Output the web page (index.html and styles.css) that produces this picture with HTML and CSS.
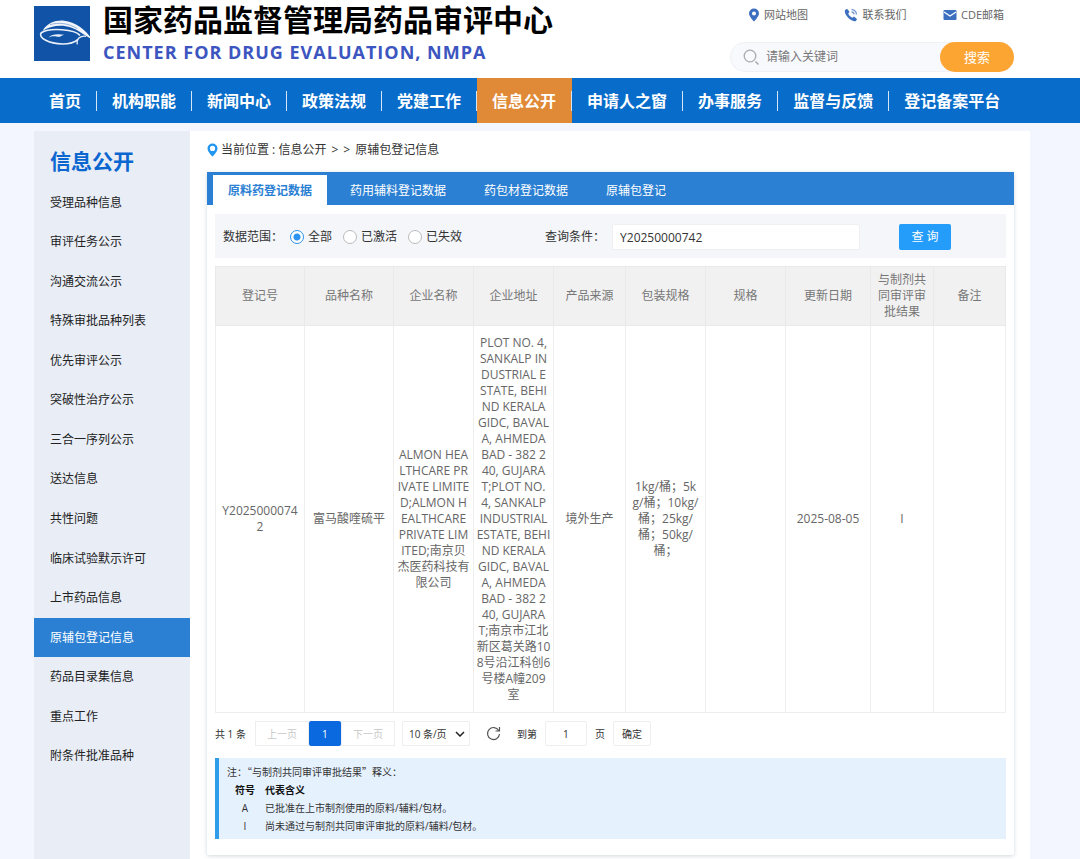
FILE: index.html
```html
<!DOCTYPE html>
<html lang="zh-CN">
<head>
<meta charset="utf-8">
<meta name="viewport" content="width=device-width, initial-scale=1">
<title>国家药品监督管理局药品审评中心</title>
<link rel="stylesheet" href="styles.css">
</head>
<body>
<header class="header">
  <div class="brand">
    <svg class="brand-logo" viewBox="102 18 168 165" aria-hidden="true">
      <rect x="102" y="18" width="168" height="165" fill="#1153a6"/>
      <path d="M128 92C142 68 168 60 192 62C226 65 256 88 277 119C262 109 250 103 240 96C212 76 168 68 128 92Z" fill="#f1f5fb"/>
      <path d="M150 74C176 66 206 70 232 86" fill="none" stroke="#6a8fc4" stroke-width="2"/>
      <path d="M240 106C224 88 150 82 124 98C112 112 146 132 188 132C208 132 224 127 234 118" fill="none" stroke="#e9f0fa" stroke-width="5" stroke-linejoin="round"/>
      <path d="M258 109C242 106 228 116 232 133" fill="none" stroke="#e9f0fa" stroke-width="4"/>
      <path d="M146 113C154 102 172 101 193 104C184 106 181 112 172 110C162 108 154 108 146 113Z" fill="#e9f0fa"/>
    </svg>
    <div class="brand-text">
      <h1 class="brand-name">国家药品监督管理局药品审评中心</h1>
      <p class="brand-english">CENTER FOR DRUG EVALUATION, NMPA</p>
    </div>
  </div>
  <div class="tools">
    <div class="quick-links">
      <a href="#"><svg width="12" height="14" viewBox="0 0 12 14" aria-hidden="true"><path fill="#3c6fc0" fill-rule="evenodd" d="M6 0.500a5 5 0 0 1 5 5C11 8.500 6 13.500 6 13.500S1 8.500 1 5.500a5 5 0 0 1 5-5ZM6 3.500a2 2 0 1 0 0 4a2 2 0 1 0 0-4Z"/></svg>网站地图</a>
      <a href="#"><svg width="14" height="14" viewBox="0 0 14 14" aria-hidden="true"><path fill="#3c6fc0" d="M1 2L3 0.800L5.500 3.800L4.300 5.500C5 7.500 6.500 9 8.500 9.800L10 8.500L13 11L12 13C8 14.500-0.500 7 1 2Z"/><path d="M7.500 1.500A5 5 0 0 1 12.500 6.500M7.500 4A2.500 2.500 0 0 1 10 6.500" fill="none" stroke="#7d9dd3" stroke-width="1.300"/></svg>联系我们</a>
      <a href="#"><svg width="14" height="12" viewBox="0 0 14 12" aria-hidden="true"><rect x="0.500" y="1" width="13" height="10" rx="1" fill="#3c6fc0"/><path d="M1 3L7 7L13 3" fill="none" stroke="#fff" stroke-width="1.200"/></svg>CDE邮箱</a>
    </div>
    <form class="site-search">
      <svg width="17" height="17" viewBox="0 0 17 17" aria-hidden="true"><circle cx="7" cy="7" r="5.800" fill="none" stroke="#aaa" stroke-width="1.300"/><path d="M12.500 12.500L15.500 15.500" stroke="#aaa" stroke-width="1.600"/></svg>
      <input type="text" aria-label="请输入关键词" placeholder="请输入关键词">
      <button type="button">搜索</button>
    </form>
  </div>
</header>
<nav class="nav">
  <a href="#">首页</a>
  <a href="#">机构职能</a>
  <a href="#">新闻中心</a>
  <a href="#">政策法规</a>
  <a href="#">党建工作</a>
  <a href="#" class="active">信息公开</a>
  <a href="#">申请人之窗</a>
  <a href="#">办事服务</a>
  <a href="#">监督与反馈</a>
  <a href="#">登记备案平台</a>
</nav>
<div class="page">
  <aside class="sidebar">
    <h2>信息公开</h2>
    <ul>
      <li><a href="#">受理品种信息</a></li>
      <li><a href="#">审评任务公示</a></li>
      <li><a href="#">沟通交流公示</a></li>
      <li><a href="#">特殊审批品种列表</a></li>
      <li><a href="#">优先审评公示</a></li>
      <li><a href="#">突破性治疗公示</a></li>
      <li><a href="#">三合一序列公示</a></li>
      <li><a href="#">送达信息</a></li>
      <li><a href="#">共性问题</a></li>
      <li><a href="#">临床试验默示许可</a></li>
      <li><a href="#">上市药品信息</a></li>
      <li><a href="#" class="active">原辅包登记信息</a></li>
      <li><a href="#">药品目录集信息</a></li>
      <li><a href="#">重点工作</a></li>
      <li><a href="#">附条件批准品种</a></li>
    </ul>
  </aside>
  <main class="content">
    <div class="breadcrumb">
      <svg width="11" height="14" viewBox="0 0 11 14" aria-hidden="true"><path fill="#2196f0" fill-rule="evenodd" d="M5.500 0.500a5 5 0 0 1 5 5C10.500 9 5.500 13.500 5.500 13.500S0.500 9 0.500 5.500a5 5 0 0 1 5-5ZM5.500 2.800a2.600 2.600 0 1 0 0 5.200a2.600 2.600 0 1 0 0-5.200Z"/></svg>
      <span>当前位置 : 信息公开</span><span>&gt;</span><span>&gt;</span><span>原辅包登记信息</span>
    </div>
    <section class="panel">
      <div class="tabs" role="tablist">
        <button type="button" role="tab" aria-selected="true" class="active">原料药登记数据</button>
        <button type="button" role="tab" aria-selected="false">药用辅料登记数据</button>
        <button type="button" role="tab" aria-selected="false">药包材登记数据</button>
        <button type="button" role="tab" aria-selected="false">原辅包登记</button>
      </div>
      <div class="panel-body">
        <form class="filter">
          <span>数据范围：</span>
          <div class="scope">
            <label><input type="radio" name="scope" checked>全部</label>
            <label><input type="radio" name="scope">已激活</label>
            <label><input type="radio" name="scope">已失效</label>
          </div>
          <label for="query">查询条件：</label>
          <input id="query" class="query" type="text" value="Y20250000742">
          <button type="button" class="query-button">查 询</button>
        </form>
        <table class="records">
          <colgroup>
            <col class="w-code"><col class="w-code"><col class="w-mid"><col class="w-mid"><col class="w-small"><col class="w-mid"><col class="w-mid"><col class="w-date"><col class="w-result"><col class="w-small">
          </colgroup>
          <thead>
            <tr><th>登记号</th><th>品种名称</th><th>企业名称</th><th>企业地址</th><th>产品来源</th><th>包装规格</th><th>规格</th><th>更新日期</th><th>与制剂共<br>同审评审<br>批结果</th><th>备注</th></tr>
          </thead>
          <tbody>
            <tr>
              <td>Y2025000074<br>2</td>
              <td>富马酸喹硫平</td>
              <td>ALMON HEA<br>LTHCARE PR<br>IVATE LIMITE<br>D;ALMON H<br>EALTHCARE<br>PRIVATE LIM<br>ITED;南京贝<br>杰医药科技有<br>限公司</td>
              <td>PLOT NO. 4,<br>SANKALP IN<br>DUSTRIAL E<br>STATE, BEHI<br>ND KERALA<br>GIDC, BAVAL<br>A, AHMEDA<br>BAD - 382 2<br>40, GUJARA<br>T;PLOT NO.<br>4, SANKALP<br>INDUSTRIAL<br>ESTATE, BEHI<br>ND KERALA<br>GIDC, BAVAL<br>A, AHMEDA<br>BAD - 382 2<br>40, GUJARA<br>T;南京市江北<br>新区葛关路10<br>8号沿江科创6<br>号楼A幢209<br>室</td>
              <td>境外生产</td>
              <td>1kg/桶；5k<br>g/桶；10kg/<br>桶；25kg/<br>桶；50kg/<br>桶；</td>
              <td></td>
              <td>2025-08-05</td>
              <td>I</td>
              <td></td>
            </tr>
          </tbody>
        </table>
        <div class="pager">
          <span class="total">共 1 条</span>
          <div class="pages">
            <button type="button" disabled>上一页</button>
            <button type="button" class="current">1</button>
            <button type="button" disabled>下一页</button>
          </div>
          <div class="page-size">
            <select aria-label="每页条数"><option>10 条/页</option></select>
            <svg width="10" height="6" viewBox="0 0 10 6" aria-hidden="true"><path d="M1 1L5 5L9 1" fill="none" stroke="#222" stroke-width="1.500"/></svg>
          </div>
          <button type="button" class="refresh" aria-label="刷新"><svg width="15" height="15" viewBox="0 0 15 15" aria-hidden="true"><path d="M12.700 4.500A6 6 0 1 0 13.500 8M13.500 1V5H9.500" fill="none" stroke="#555" stroke-width="1.200"/></svg></button>
          <label for="goto">到第</label>
          <input id="goto" type="text" value="1">
          <span>页</span>
          <button type="button" class="confirm">确定</button>
        </div>
        <div class="note">
          <p>注：“与制剂共同审评审批结果”释义：</p>
          <table>
            <thead><tr><th>符号</th><th>代表含义</th></tr></thead>
            <tbody>
              <tr><td>A</td><td>已批准在上市制剂使用的原料/辅料/包材。</td></tr>
              <tr><td>I</td><td>尚未通过与制剂共同审评审批的原料/辅料/包材。</td></tr>
            </tbody>
          </table>
        </div>
      </div>
    </section>
  </main>
</div>
</body>
</html>
```
FILE: styles.css
```css
* { box-sizing: border-box; }

body {
  margin: 0;
  min-height: 100vh;
  display: flex;
  flex-direction: column;
  background: #f3f6fe;
  color: #333;
  font: 12px/16px "Open Sans", "Noto Sans CJK SC", sans-serif;
}

h1, h2, p, ul { margin: 0; padding: 0; }
ul { list-style: none; }
a { color: inherit; text-decoration: none; }
button, input, select { font: inherit; color: inherit; }
button { border: 0; padding: 0; background: none; cursor: pointer; }
svg { flex: none; }

/* Header */
.header {
  display: flex;
  justify-content: space-between;
  padding: 0 66px 6px 34px;
  background: #fff;
}
.brand { display: flex; gap: 13px; }
.brand-logo { width: 56px; height: 55px; margin-top: 6px; overflow: visible; }
.brand-name {
  font-size: 30px;
  line-height: 40px;
  font-weight: 700;
  color: #000;
  white-space: nowrap;
}
.brand-english {
  font-size: 18px;
  line-height: 24px;
  font-weight: 700;
  letter-spacing: 1px;
  color: #3c55c0;
  white-space: nowrap;
}
.tools { width: 284px; }
.quick-links {
  display: flex;
  justify-content: space-between;
  padding: 7px 10px 0 18px;
  font-size: 11px;
  color: #666;
}
.quick-links a { display: flex; align-items: center; gap: 4px; }
.site-search {
  display: flex;
  align-items: center;
  height: 30px;
  margin-top: 19px;
  padding-left: 12px;
  border: 1px solid #eff1f5;
  border-right: 0;
  border-radius: 15px;
  background: #f8f9fd;
}
.site-search input {
  flex: 1;
  min-width: 0;
  border: 0;
  padding: 0 6px;
  background: none;
}
.site-search input::placeholder { color: #777; opacity: 1; }
.site-search button {
  width: 74px;
  height: 30px;
  border-radius: 15px;
  background: #fca533;
  color: #fff;
  font-size: 13px;
}

/* Main navigation */
.nav {
  display: flex;
  height: 45px;
  padding: 0 34px;
  background: #086dca;
  color: #fff;
  font-size: 16px;
  font-weight: 700;
}
.nav a {
  display: flex;
  align-items: center;
  padding-left: 15px;
  white-space: nowrap;
}
.nav a::after {
  content: "";
  width: 1px;
  height: 20px;
  margin-left: 15px;
  background: #d5e5f5;
}
.nav a:last-child::after { background: none; }
.nav .active { background: #e08a38; }

/* Page columns */
.page {
  flex: 1;
  display: flex;
  padding: 8px 50px 0 34px;
}
.sidebar { flex: 0 0 156px; background: #e8edf6; color: #222; }
.sidebar h2 {
  padding: 16px 16px 8px;
  font-size: 21px;
  line-height: 28px;
  color: #0b66d0;
}
.sidebar ul { display: grid; grid-auto-rows: 1fr; min-height: 593px; }
.sidebar li a { display: flex; align-items: center; height: 100%; padding: 0 16px; }
.sidebar .active { background: #2b80d3; color: #fff; }
.content { flex: 1; min-width: 0; padding: 11px 16px 4px 17px; background: #fff; }
.breadcrumb {
  display: flex;
  align-items: center;
  gap: 5px;
  padding-bottom: 14px;
}
.breadcrumb svg { margin-right: -2px; }

/* Panel and tabs */
.panel { border-radius: 2px; box-shadow: 0 1px 4px #cfd8dc; }
.tabs {
  display: flex;
  gap: 8px;
  padding: 3px 6px 0;
  background: #2b80d3;
  color: #fff;
}
.tabs button { height: 30px; padding: 2px 15px 0; }
.tabs .active { background: #fff; color: #2b80d3; font-weight: 700; }
.panel-body { padding: 9px 8px 16px; }

/* Filter */
.filter {
  display: flex;
  align-items: center;
  height: 44px;
  padding: 2px 55px 0 8px;
  background: #f4f6fa;
  white-space: nowrap;
}
.scope { display: flex; gap: 11px; margin: 0 83px 0 7px; }
.scope label { display: flex; align-items: center; gap: 4px; }
.scope input {
  appearance: none;
  width: 14px;
  height: 14px;
  margin: 0;
  border: 1px solid #bbb;
  border-radius: 50%;
  background: #fff;
}
.scope input:checked {
  border-color: #2b93f0;
  background: radial-gradient(circle, #2b93f0 0 3px, #fff 4px);
}
.query {
  flex: 1;
  min-width: 0;
  height: 26px;
  margin: 0 39px 0 7px;
  padding: 0 7px;
  border: 1px solid #f0f0f3;
  border-radius: 2px;
  background: #fff;
}
.query-button {
  width: 52px;
  height: 26px;
  border-radius: 2px;
  background: #249cfa;
  color: #fff;
}

/* Records */
.records {
  width: 100%;
  margin-top: 8px;
  border-collapse: collapse;
  table-layout: fixed;
  color: #666;
  text-align: center;
}
.w-code { width: 89px; }
.w-mid { width: 80px; }
.w-small { width: 72px; }
.w-date { width: 85px; }
.w-result { width: 63px; }
.records th, .records td {
  padding: 5px 0;
  border: 1px solid #eee;
  font-weight: 400;
  white-space: nowrap;
}
.records th { background: #f1f1f1; border-color: #e9e9e9; color: #777; }
.records td { padding: 9px 0; }

/* Pagination */
.pager {
  display: flex;
  align-items: center;
  margin-top: 8px;
  font-size: 10px;
}
.pages { display: flex; margin: 0 7px 0 9px; }
.pages button { width: 54px; height: 25px; border: 1px solid #eee; }
.pages button:disabled { color: #c8c8c8; }
.pages .current { width: 32px; border: 0; border-radius: 2px; background: #0b69e0; color: #fff; }
.page-size { position: relative; }
.page-size select {
  appearance: none;
  width: 68px;
  height: 25px;
  padding: 0 6px;
  border: 1px solid #eee;
  border-radius: 2px;
  background: #fff;
}
.page-size svg { position: absolute; right: 5px; top: 10px; pointer-events: none; }
.refresh { display: flex; margin: 0 16px; }
.pager input {
  width: 42px;
  height: 25px;
  margin: 0 8px;
  border: 1px solid #eee;
  border-radius: 2px;
  text-align: center;
}
.confirm { width: 38px; height: 25px; margin-left: 8px; border: 1px solid #eee; border-radius: 2px; }

/* Note */
.note {
  margin-top: 12px;
  padding: 5px 8px 4px;
  border-left: 4px solid #2f9dea;
  background: #e6f1fe;
  font-size: 10px;
  line-height: 18px;
}
.note p { font-family: "Noto Sans CJK SC", sans-serif; }
.note table { margin-left: 8px; border-collapse: collapse; }
.note th, .note td { padding: 0 10px 0 0; text-align: left; }
.note th { color: #111; }
.note td:first-child { text-align: center; }
```
